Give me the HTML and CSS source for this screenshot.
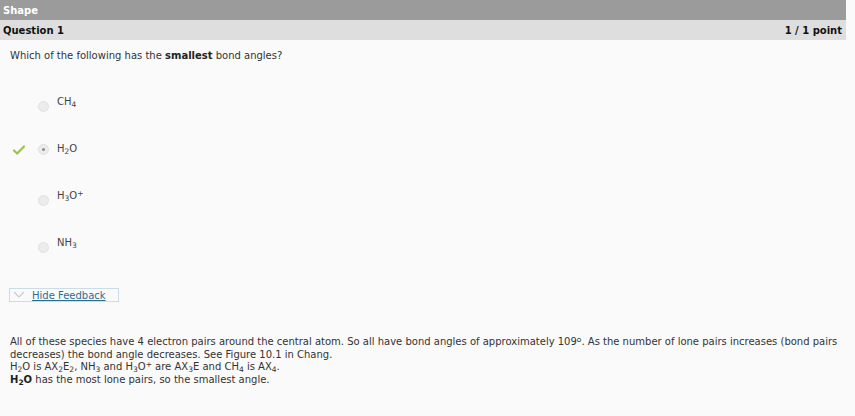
FILE: index.html
```html
<!DOCTYPE html>
<html>
<head>
<meta charset="utf-8">
<link rel="stylesheet" href="styles.css">
</head>
<body>
<div class="page">
  <div class="section-bar">Shape</div>
  <div class="question-bar">
    <span>Question 1</span>
    <span>1 / 1 point</span>
  </div>
  <div class="content">
    <p class="prompt">Which of the following has the <b>smallest</b> bond angles?</p>
    <div class="options">
      <div class="option">
        <span class="mark"></span>
        <span class="radio"></span>
        <span class="label">CH<sub>4</sub></span>
      </div>
      <div class="option">
        <span class="mark"><svg width="12" height="10" viewBox="0 0 12 10"><path d="M1 5.5 L4.2 8.5 L11 1.5" fill="none" stroke="#9cc24a" stroke-width="2.2" stroke-linecap="round" stroke-linejoin="round"/></svg></span>
        <span class="radio checked"></span>
        <span class="label">H<sub>2</sub>O</span>
      </div>
      <div class="option">
        <span class="mark"></span>
        <span class="radio"></span>
        <span class="label">H<sub>3</sub>O<sup>+</sup></span>
      </div>
      <div class="option">
        <span class="mark"></span>
        <span class="radio"></span>
        <span class="label">NH<sub>3</sub></span>
      </div>
    </div>
    <div class="feedback-toggle">
      <svg class="chev" width="12" height="8" viewBox="0 0 12 8"><path d="M1 1 L6 6 L11 1" fill="none" stroke="#c4ccd2" stroke-width="1.2"/></svg>
      <a class="toggle-link" href="#">Hide Feedback</a>
    </div>
    <div class="feedback">
      <p>All of these species have 4 electron pairs around the central atom. So all have bond angles of approximately 109<sup>o</sup>. As the number of lone pairs increases (bond pairs decreases) the bond angle decreases. See Figure 10.1 in Chang.<br>
      H<sub>2</sub>O is AX<sub>2</sub>E<sub>2</sub>, NH<sub>3</sub> and H<sub>3</sub>O<sup>+</sup> are AX<sub>3</sub>E and CH<sub>4</sub> is AX<sub>4</sub>.<br>
      <b>H<sub>2</sub>O</b> has the most lone pairs, so the smallest angle.</p>
    </div>
  </div>
</div>
</body>
</html>
```

FILE: styles.css
```css
html, body {
  margin: 0;
  padding: 0;
  background: #fafafa;
}
body {
  font-family: "DejaVu Sans", Verdana, sans-serif;
  font-size: 10px;
  color: #333;
}
.page {
  width: 846px;
}
.section-bar {
  background: #9b9b9b;
  color: #fff;
  font-weight: bold;
  height: 20px;
  line-height: 22px;
  padding-left: 3px;
}
.question-bar {
  background: #dedede;
  color: #111;
  font-weight: bold;
  height: 20px;
  line-height: 21px;
  padding: 0 4px 0 3px;
  display: flex;
  justify-content: space-between;
}
.content {
  padding: 0 10px;
}
.prompt {
  margin: 0;
  padding-top: 10px;
  line-height: 12px;
}
.prompt b { color: #222; }
.options {
  display: flex;
  flex-direction: column;
  margin-top: 16px;
}
.option {
  display: flex;
  align-items: center;
  height: 47px;
}
.mark {
  width: 28px;
  display: flex;
  justify-content: flex-start;
  padding-left: 3px;
  padding-top: 3px;
  box-sizing: border-box;
}
.radio {
  width: 9px;
  height: 9px;
  border-radius: 50%;
  background: #ececec;
  border: 1px solid #e0e0e0;
  margin-top: 10px;
  position: relative;
}
.radio.checked {
  margin-top: 2px;
}
.radio.checked::after {
  content: "";
  position: absolute;
  left: 3px;
  top: 3px;
  width: 3px;
  height: 3px;
  border-radius: 50%;
  background: #8a8a8a;
}
.label {
  margin-left: 8px;
  color: #444;
}
.label sub, .feedback sub {
  font-size: 7.5px;
  vertical-align: -2px;
  line-height: 0;
}
.label sup, .feedback sup {
  font-size: 7.5px;
  vertical-align: 3px;
  line-height: 0;
}
.feedback-toggle {
  margin-top: 22px;
  width: 108px;
  height: 12px;
  border: 1px solid #c8dde5;
  display: flex;
  align-items: center;
  margin-left: -1px;
}
.chev {
  margin-left: 3px;
  margin-right: 7px;
}
.toggle-link {
  color: #2a6d90;
  text-decoration: underline;
}
.feedback {
  margin-top: 34px;
  margin-right: -9px;
}
.feedback p {
  margin: 0;
  line-height: 12.7px;
  color: #333;
}
.feedback b { color: #222; }
```
